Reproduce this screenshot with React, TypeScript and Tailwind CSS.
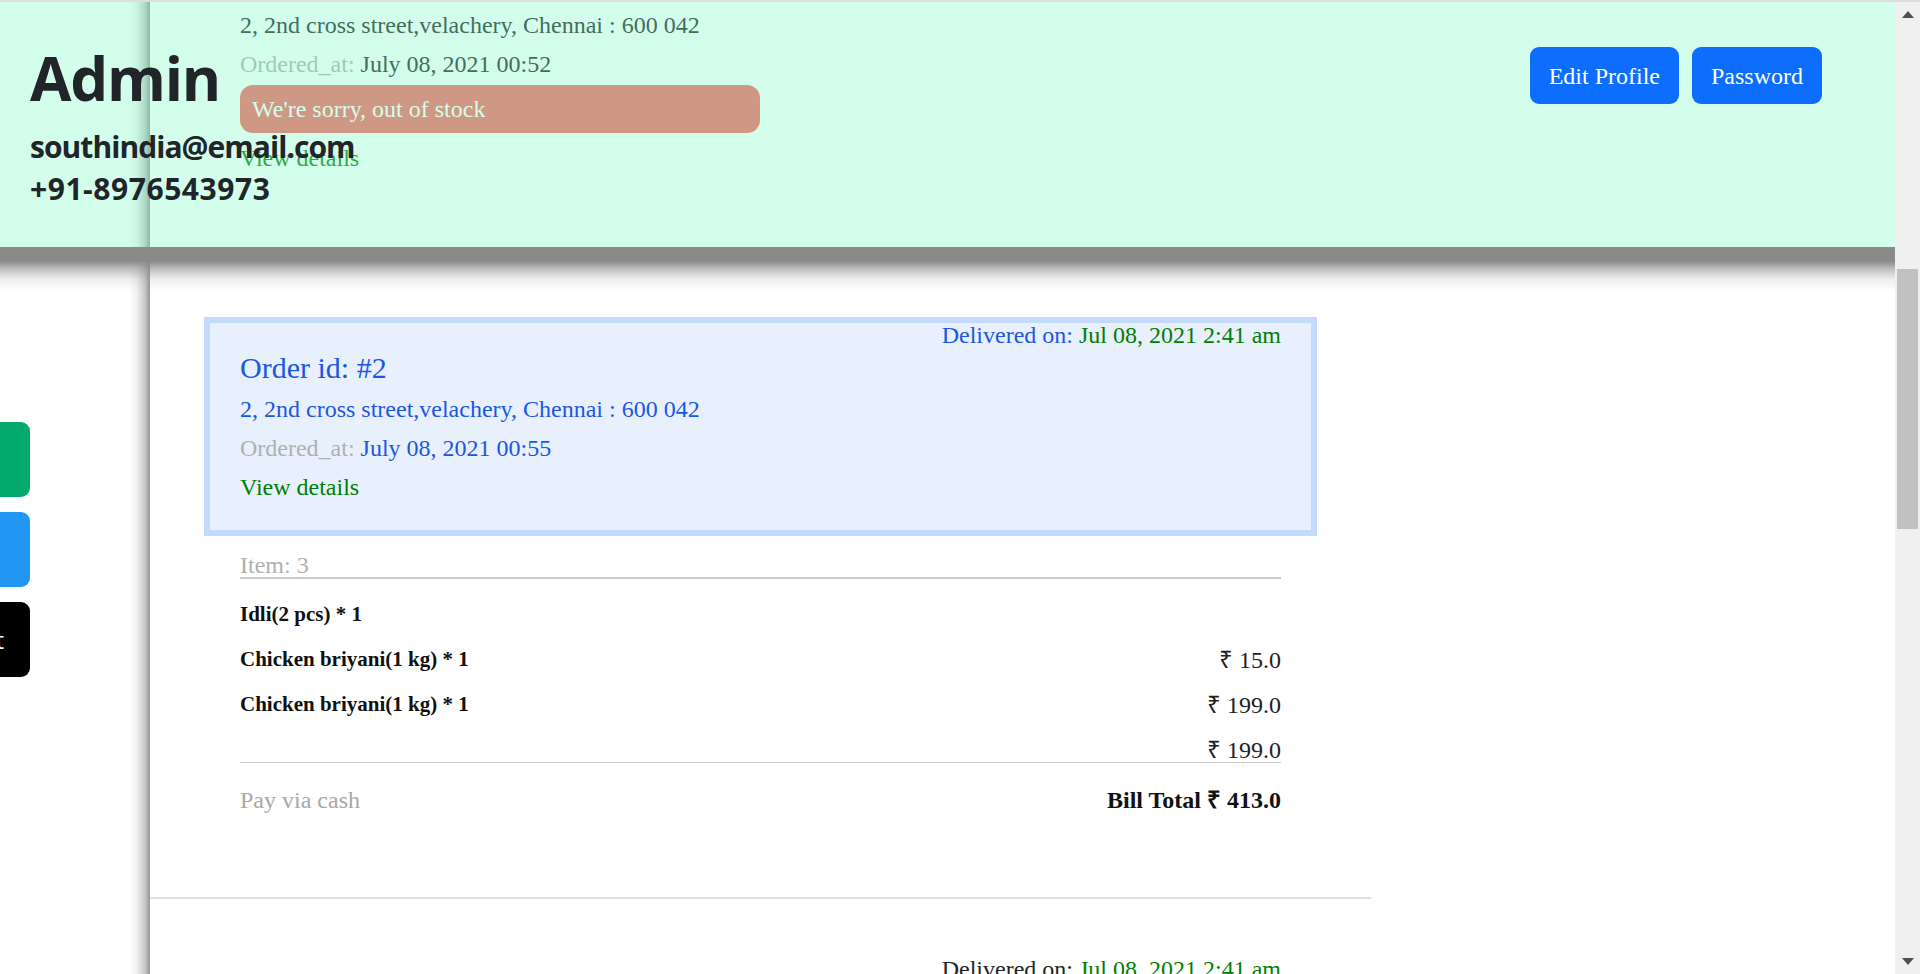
import React from 'react';

// ---------------------------------------------------------------------------
// Data
// ---------------------------------------------------------------------------

interface OrderItem {
  name: string;
  qty: number;
}

interface Order {
  id: number;
  deliveredOn: string;
  address: string;
  orderedAt: string;
  outOfStock?: boolean;
  highlighted?: boolean;
  items: OrderItem[];
  prices: string[];
  total?: string;
  payment?: string;
}

const ADDRESS = '2, 2nd cross street,velachery, Chennai : 600 042';

const orders: Order[] = [
  {
    id: 1,
    deliveredOn: 'Jul 08, 2021 2:38 am',
    address: ADDRESS,
    orderedAt: 'July 08, 2021 00:52',
    outOfStock: true,
    items: [],
    prices: [],
  },
  {
    id: 2,
    deliveredOn: 'Jul 08, 2021 2:41 am',
    address: ADDRESS,
    orderedAt: 'July 08, 2021 00:55',
    highlighted: true,
    items: [
      { name: 'Idli(2 pcs)', qty: 1 },
      { name: 'Chicken briyani(1 kg)', qty: 1 },
      { name: 'Chicken briyani(1 kg)', qty: 1 },
    ],
    prices: ['15.0', '199.0', '199.0'],
    total: '413.0',
    payment: 'cash',
  },
  {
    id: 3,
    deliveredOn: 'Jul 08, 2021 2:41 am',
    address: ADDRESS,
    orderedAt: 'July 08, 2021 01:02',
    items: [{ name: 'Idli(2 pcs)', qty: 2 }],
    prices: ['30.0'],
    total: '30.0',
    payment: 'cash',
  },
];

// ---------------------------------------------------------------------------
// Sidebar (mostly slid off-screen, only the button tips show)
// ---------------------------------------------------------------------------

const Sidebar: React.FC = () => (
  <aside className="w-[150px] shrink-0 bg-white bg-[linear-gradient(to_left,rgba(0,0,0,0.42)_0px,rgba(0,0,0,0.22)_5px,rgba(0,0,0,0.06)_13px,rgba(0,0,0,0)_21px)]">
    <div className="flex flex-col gap-[15px] pt-[420px] font-['Open_Sans',sans-serif] text-[24px] text-white">
      <button className="-ml-[130px] flex h-[75px] w-[160px] items-center justify-end rounded-[9px] bg-[#05aa6e] pr-[48px]">
        Profile
      </button>
      <button className="-ml-[130px] flex h-[75px] w-[160px] items-center justify-end rounded-[9px] bg-[#2196f3] pr-[48px]">
        Orders
      </button>
      <button className="-ml-[130px] flex h-[75px] w-[160px] items-center justify-end rounded-[9px] bg-black pr-[26px]">
        Logout
      </button>
    </div>
  </aside>
);

// ---------------------------------------------------------------------------
// Order card
// ---------------------------------------------------------------------------

const OrderCard: React.FC<{ order: Order }> = ({ order }) => {
  const hl = order.highlighted;
  const ink = hl ? 'text-[#1a58e0]' : 'text-[#212529]';
  // prices are rendered one row lower than their names (as on the live page)
  const rows = order.items.length;

  return (
    <div className="mx-[54px]">
      <div
        className={`border-[6px] px-[30px] pt-[1px] pb-[23px] ${
          hl ? 'border-[#c4dafc] bg-[#e8f0fe]' : 'border-transparent'
        }`}
      >
        <div className={`h-[22px] text-right leading-[22px] ${ink}`}>
          Delivered on: <span className="text-[#008000]">{order.deliveredOn}</span>
        </div>
        <div className={`mt-[2px] h-[40px] text-[30px] leading-[40px] ${ink}`}>Order id: #{order.id}</div>
        <div className={`mt-[2px] h-[39px] leading-[39px] ${ink}`}>{order.address}</div>
        <div className="h-[39px] leading-[39px]">
          <span className="text-[#b0b0b0]">Ordered_at:</span> <span className={ink}>{order.orderedAt}</span>
        </div>
        {order.outOfStock && (
          <div className="mt-[1px] flex h-[48px] w-[520px] items-center rounded-[13px] bg-[#f76463] px-[12px] text-white">
            We're sorry, out of stock
          </div>
        )}
        <div className={`h-[39px] leading-[39px] text-[#008000] ${order.outOfStock ? 'mt-[6px]' : ''}`}>
          View details
        </div>
      </div>

      {rows > 0 && (
        <div className="px-[36px]">
          <div className="mt-[17px] h-[26px] border-b-2 border-[#c8c8c8] leading-[24px] text-[#b0b0b0]">
            Item: {rows}
          </div>

          <div className="mt-[23px] flex justify-between border-b border-[#cccccc]">
            <div className="flex flex-col gap-[21px]">
              {order.items.map((item, i) => (
                <div key={i} className="h-[24px] text-[21px] font-bold leading-[24px] text-[#111]">
                  {item.name} * {item.qty}
                </div>
              ))}
            </div>
            <div className="flex flex-col gap-[21px] pt-[46px] text-right text-[#222]">
              {order.prices.map((p, i) => (
                <div key={i} className="h-[24px] leading-[24px]">
                  ₹ {p}
                </div>
              ))}
            </div>
          </div>

          <div className="mt-[25px] flex h-[24px] justify-between leading-[24px]">
            <span className="text-[#a8a8a8]">Pay via {order.payment}</span>
            <span className="font-bold text-[#111]">Bill Total ₹ {order.total}</span>
          </div>
        </div>
      )}
    </div>
  );
};

// ---------------------------------------------------------------------------
// ---------------------------------------------------------------------------

const ProfileHeader: React.FC = () => (
  <header className="absolute inset-x-0 top-0">
    <div className="flex h-[245px] justify-between bg-[rgba(130,252,200,0.343)]">
      <div className="pl-[30px] pt-[40px] font-['Open_Sans',sans-serif] font-bold text-[#212529]">
        <h1 className="text-[60px] leading-[72px] tracking-[-1.2px]">Admin</h1>
        <div className="mt-[15px] text-[30px] leading-[36px] tracking-[-0.95px]">southindia@email.com</div>
        <div className="mt-[6px] text-[30px] leading-[36px] tracking-[0.55px]">+91-8976543973</div>
      </div>
      <div className="flex items-start gap-[13px] pr-[73px] pt-[45px]">
        <button className="flex h-[57px] items-center rounded-[9px] bg-[#0d6efd] px-[19px] text-[24px] text-white">
          Edit Profile
        </button>
        <button className="flex h-[57px] items-center rounded-[9px] bg-[#0d6efd] px-[19px] text-[24px] text-white">
          Password
        </button>
      </div>
    </div>
    <div className="h-[44px] bg-[linear-gradient(to_bottom,#8a8a8a_0px,#8a8a8a_14px,rgba(138,138,138,0.55)_22px,rgba(138,138,138,0.15)_32px,rgba(138,138,138,0)_44px)]" />
  </header>
);

// ---------------------------------------------------------------------------
// Scrollbar
// ---------------------------------------------------------------------------

const Scrollbar: React.FC = () => (
  <div className="flex w-[25px] shrink-0 flex-col bg-[#f0f0f0]">
    <div className="flex h-[25px] items-center justify-center">
      <svg width="12" height="7" viewBox="0 0 12 7">
        <polygon points="0,7 6,0 12,7" fill="#505050" />
      </svg>
    </div>
    <div className="flex-1 px-[2px]">
      <div className="mt-[242px] h-[260px] bg-[#c1c1c1]" />
    </div>
    <div className="flex h-[25px] items-center justify-center">
      <svg width="12" height="7" viewBox="0 0 12 7">
        <polygon points="0,0 12,0 6,7" fill="#505050" />
      </svg>
    </div>
  </div>
);

// ---------------------------------------------------------------------------
// App
// ---------------------------------------------------------------------------

export default function App() {
  return (
    <div className="flex h-[974px] w-[1920px] flex-col overflow-hidden bg-white font-['Liberation_Serif','Times_New_Roman',serif] text-[24px]">
      <div className="h-[2px] shrink-0 bg-[#dadde1]" />
      <div className="flex min-h-0 flex-1">
        <div className="relative min-w-0 flex-1 overflow-hidden">
          <div className="flex h-full">
            <Sidebar />
            <main className="w-[1221px] shrink-0">
              <div className="-mt-[69px]">
                <div className="mb-[110px]">
                  <OrderCard order={orders[0]} />
                </div>
                <OrderCard order={orders[1]} />
                <hr className="mt-[85px] mb-[52px] border-t-2 border-[#e0e0e0]" />
                <OrderCard order={orders[2]} />
              </div>
            </main>
          </div>
          <ProfileHeader />
        </div>
        <Scrollbar />
      </div>
    </div>
  );
}
